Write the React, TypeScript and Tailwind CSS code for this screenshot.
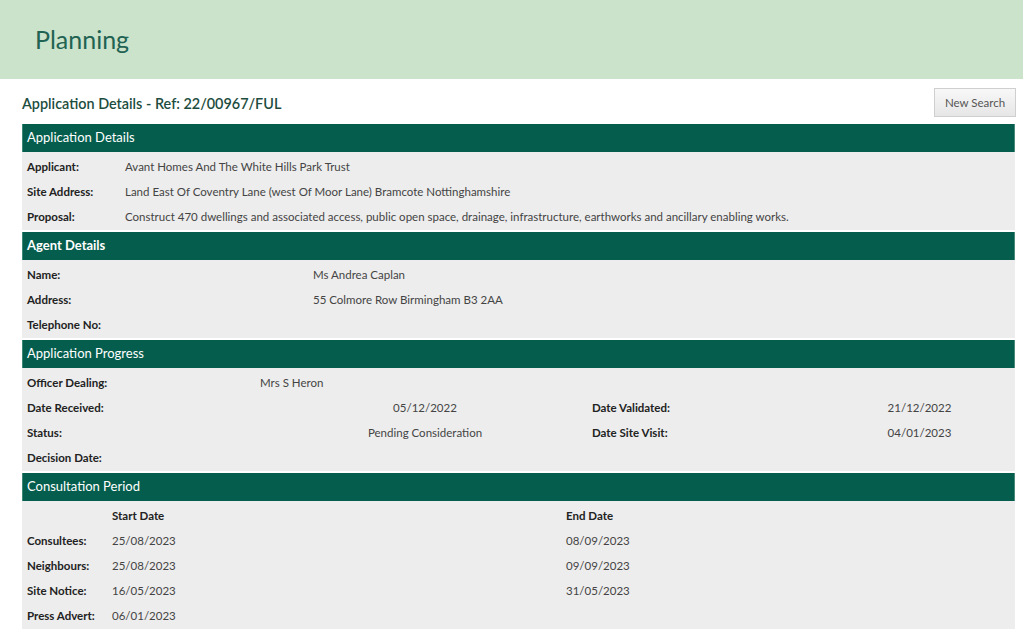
import React from "react";

type Row = { label: string; value?: string };

function SectionHeader({ title, bold }: { title: string; bold?: boolean }) {
  return (
    <div
      className={`h-[28px] flex items-center bg-[#055e4d] border-l border-[#3d8574] border-r border-r-[#4a8a7b] pl-[4px] text-white text-[13px] ${
        bold ? "font-bold" : ""
      }`}
    >
      {title}
    </div>
  );
}

function Body({ children }: { children: React.ReactNode }) {
  return <div className="bg-[#ededed] pt-[2px] pb-[1px] mb-[2px]">{children}</div>;
}

const applicationRows: Row[] = [
  { label: "Applicant:", value: "Avant Homes And The White Hills Park Trust" },
  { label: "Site Address:", value: "Land East Of Coventry Lane (west Of Moor Lane) Bramcote Nottinghamshire" },
  {
    label: "Proposal:",
    value:
      "Construct 470 dwellings and associated access, public open space, drainage, infrastructure, earthworks and ancillary enabling works.",
  },
];

const agentRows: Row[] = [
  { label: "Name:", value: "Ms Andrea Caplan" },
  { label: "Address:", value: "55 Colmore Row Birmingham B3 2AA" },
  { label: "Telephone No:" },
];

const consultRows = [
  { label: "Consultees:", start: "25/08/2023", end: "08/09/2023" },
  { label: "Neighbours:", start: "25/08/2023", end: "09/09/2023" },
  { label: "Site Notice:", start: "16/05/2023", end: "31/05/2023" },
  { label: "Press Advert:", start: "06/01/2023", end: "" },
];

export default function App() {
  return (
    <div className="min-h-screen bg-white font-['Lato',sans-serif] text-[11.5px] text-[#444]">
      <header className="h-[79px] bg-[#cbe2cb] flex items-center pl-[35px]">
        <h1 className="text-[25px] text-[#1f6353]">Planning</h1>
      </header>

      <div className="pl-[22px] pr-[7px] pt-[9px]">
        <div className="flex items-center justify-between h-[29px] mb-[7px]">
          <h2 className="text-[14.4px] font-semibold text-[#1d4d40] pt-[3px]">
            Application Details - Ref: 22/00967/FUL
          </h2>
          <button className="h-[29px] w-[82px] border border-[#cfcfcf] bg-gradient-to-b from-[#f8f8f8] to-[#e6e6e6] text-[#555] text-[11.5px]">
            New Search
          </button>
        </div>

        <div className="w-[993px]">
          <SectionHeader title="Application Details" />
          <Body>
            {applicationRows.map((r) => (
              <div key={r.label} className="grid grid-cols-[98px_1fr] h-[25px] items-center px-[5px]">
                <span className="font-bold text-[#222]">{r.label}</span>
                <span>{r.value}</span>
              </div>
            ))}
          </Body>

          <SectionHeader title="Agent Details" bold />
          <Body>
            {agentRows.map((r) => (
              <div key={r.label} className="grid grid-cols-[286px_1fr] h-[25px] items-center px-[5px]">
                <span className="font-bold text-[#222]">{r.label}</span>
                <span>{r.value}</span>
              </div>
            ))}
          </Body>

          <SectionHeader title="Application Progress" />
          <Body>
            <div className="grid grid-cols-[233px_1fr] h-[25px] items-center px-[5px]">
              <span className="font-bold text-[#222]">Officer Dealing:</span>
              <span>Mrs S Heron</span>
            </div>
            <div className="grid grid-cols-[232px_332px_233px_1fr] h-[25px] items-center pl-[5px]">
              <span className="font-bold text-[#222]">Date Received:</span>
              <span className="text-center">05/12/2022</span>
              <span className="font-bold text-[#222] pl-[1px]">Date Validated:</span>
              <span className="text-center">21/12/2022</span>
            </div>
            <div className="grid grid-cols-[232px_332px_233px_1fr] h-[25px] items-center pl-[5px]">
              <span className="font-bold text-[#222]">Status:</span>
              <span className="text-center">Pending Consideration</span>
              <span className="font-bold text-[#222] pl-[1px]">Date Site Visit:</span>
              <span className="text-center">04/01/2023</span>
            </div>
            <div className="grid grid-cols-[232px_1fr] h-[25px] items-center px-[5px]">
              <span className="font-bold text-[#222]">Decision Date:</span>
              <span></span>
            </div>
          </Body>

          <SectionHeader title="Consultation Period" />
          <Body>
            <div className="grid grid-cols-[85px_454px_1fr] h-[25px] items-center px-[5px]">
              <span></span>
              <span className="font-bold text-[#222]">Start Date</span>
              <span className="font-bold text-[#222]">End Date</span>
            </div>
            {consultRows.map((r) => (
              <div key={r.label} className="grid grid-cols-[85px_454px_1fr] h-[25px] items-center px-[5px]">
                <span className="font-bold text-[#222]">{r.label}</span>
                <span>{r.start}</span>
                <span>{r.end}</span>
              </div>
            ))}
          </Body>
        </div>
      </div>
    </div>
  );
}
